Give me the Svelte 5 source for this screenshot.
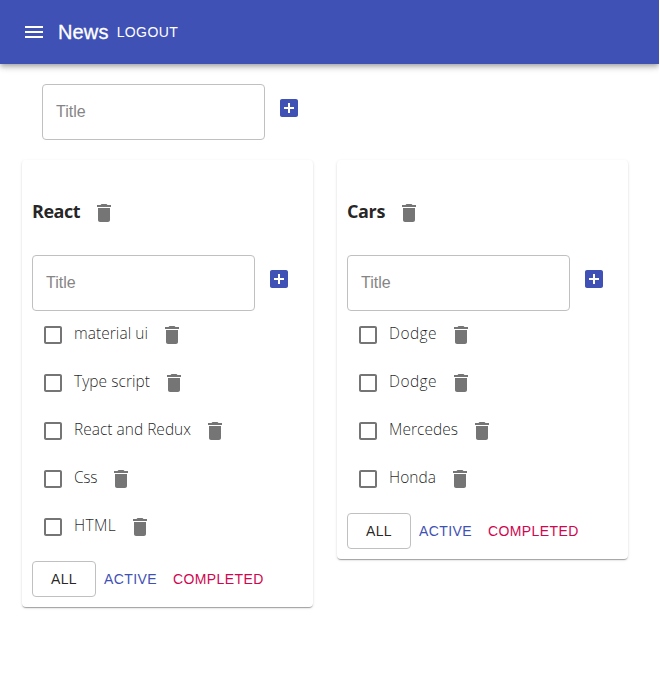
<script>
  const lists = [
    {
      title: 'React', width: 48,
      tasks: [
        { label: 'material ui', width: 74 },
        { label: 'Type script', width: 76 },
        { label: 'React and Redux', width: 117 },
        { label: 'Css', width: 23 },
        { label: 'HTML', width: 42 }
      ]
    },
    {
      title: 'Cars', width: 38,
      tasks: [
        { label: 'Dodge', width: 48 },
        { label: 'Dodge', width: 48 },
        { label: 'Mercedes', width: 69 },
        { label: 'Honda', width: 47 }
      ]
    }
  ];

  // Spreads the letters so that a label fills its column exactly.
  function fit(node, width) {
    const natural = node.firstElementChild.getBoundingClientRect().width;
    node.style.letterSpacing = (width - natural) / node.textContent.length + 'px';
  }
</script>

{#snippet trash()}
  <button class="icon-btn" aria-label="Delete">
    <svg viewBox="0 0 24 24"><path d="M6 19c0 1.1.9 2 2 2h8c1.1 0 2-.9 2-2V7H6v12zM19 4h-3.5l-1-1h-5l-1 1H5v2h14V4z" /></svg>
  </button>
{/snippet}

{#snippet form()}
  <div class="form">
    <input placeholder="Title" aria-label="Title" />
    <button class="icon-btn add" aria-label="Add">
      <svg viewBox="0 0 24 24"><path d="M19 3H5c-1.11 0-2 .9-2 2v14c0 1.1.89 2 2 2h14c1.1 0 2-.9 2-2V5c0-1.1-.9-2-2-2zm-2 10h-4v4h-2v-4H7v-2h4V7h2v4h4v2z" /></svg>
    </button>
  </div>
{/snippet}

<div class="app">
  <header>
    <button class="menu" aria-label="Menu">
      <svg viewBox="0 0 24 24"><path d="M3 18h18v-2H3v2zm0-5h18v-2H3v2zm0-7v2h18V6H3z" /></svg>
    </button>
    <span class="brand">News</span>
    <button class="text-btn logout">Logout</button>
  </header>
  <main>
    <div class="new-list">{@render form()}</div>
    <div class="lists">
      {#each lists as list}
        <section class="card">
          <div class="head">
            <h3 use:fit={list.width} style:width="{list.width}px"><span>{list.title}</span></h3>
            {@render trash()}
          </div>
          {@render form()}
          <div class="tasks">
            {#each list.tasks as task}
              <div class="task">
                <button class="icon-btn check" role="checkbox" aria-checked="false" aria-label={task.label}>
                  <svg viewBox="0 0 24 24"><path d="M19 5v14H5V5h14m0-2H5c-1.1 0-2 .9-2 2v14c0 1.1.9 2 2 2h14c1.1 0 2-.9 2-2V5c0-1.1-.9-2-2-2z" /></svg>
                </button>
                <div class="label" use:fit={task.width} style:width="{task.width}px"><span>{task.label}</span></div>
                {@render trash()}
              </div>
            {/each}
          </div>
          <div class="filters">
            <button class="text-btn outlined">All</button>
            <button class="text-btn active">Active</button>
            <button class="text-btn completed">Completed</button>
          </div>
        </section>
      {/each}
    </div>
  </main>
</div>

<style>
  :global(body) { margin: 0; background: #fff; }
  .app {
    width: 659px;
    min-height: 679px;
    box-sizing: border-box;
    overflow: hidden;
    color: rgba(0, 0, 0, 0.87);
    font-family: "Open Sans", "Noto Sans", sans-serif;
  }
  button { border: 0; background: none; margin: 0; padding: 0; color: inherit; }
  svg { display: block; width: 24px; height: 24px; fill: currentColor; }
  header {
    display: flex;
    align-items: center;
    height: 64px;
    box-sizing: border-box;
    padding-left: 22px;
    background: #3f51b5;
    color: #fff;
    box-shadow: 0 2px 4px -1px rgba(0, 0, 0, 0.2), 0 4px 5px 0 rgba(0, 0, 0, 0.14), 0 1px 10px 0 rgba(0, 0, 0, 0.12);
  }
  .menu { margin-right: 12px; }
  .brand {
    font: 20px/32px "Liberation Sans", Arial, sans-serif;
    letter-spacing: 0.15px;
    -webkit-text-stroke: 0.3px currentColor;
  }
  .text-btn {
    height: 36px;
    padding: 0 8px;
    box-sizing: border-box;
    font: 14px/24px "Liberation Sans", Arial, sans-serif;
    letter-spacing: 0.4px;
    text-transform: uppercase;
    white-space: nowrap;
  }
  main { padding: 20px 22px 0; }
  .new-list { padding-left: 20px; }
  .form { display: flex; align-items: flex-start; height: 56px; }
  input {
    width: 223px;
    height: 56px;
    box-sizing: border-box;
    padding: 0 13px 1px;
    border: 1px solid #c0c0c0;
    border-radius: 4px;
    outline: 0;
    background: transparent;
    font: 16px "Liberation Sans", Arial, sans-serif;
  }
  input::placeholder { color: #858585; opacity: 1; }
  .icon-btn { flex: none; padding: 12px; color: #757575; }
  .add { color: #3f51b5; }
  .lists { display: flex; align-items: flex-start; gap: 24px; margin-top: 20px; }
  .card {
    flex: none;
    width: 291px;
    box-sizing: border-box;
    padding: 10px;
    border-radius: 4px;
    background: #fff;
    box-shadow: 0 2px 1px -1px rgba(0, 0, 0, 0.2), 0 1px 1px 0 rgba(0, 0, 0, 0.14), 0 1px 3px 0 rgba(0, 0, 0, 0.12);
  }
  .head { display: flex; align-items: center; height: 48px; margin: 19px 0 18px; }
  h3 { flex: none; margin: 0; padding-bottom: 4px; font-size: 18px; line-height: 24px; font-weight: 700; white-space: nowrap; }
  .task { display: flex; align-items: center; height: 48px; }
  .check { padding: 9px; }
  .label { flex: none; padding-bottom: 4px; font-size: 15.5px; line-height: 24px; white-space: nowrap; font-weight: 360; }
  .filters { display: flex; margin-top: 10px; }
  .outlined { width: 64px; border: 1px solid #c0c0c0; border-radius: 4px; }
  .active { color: #3f51b5; }
  .completed { color: #d0064f; }
</style>
